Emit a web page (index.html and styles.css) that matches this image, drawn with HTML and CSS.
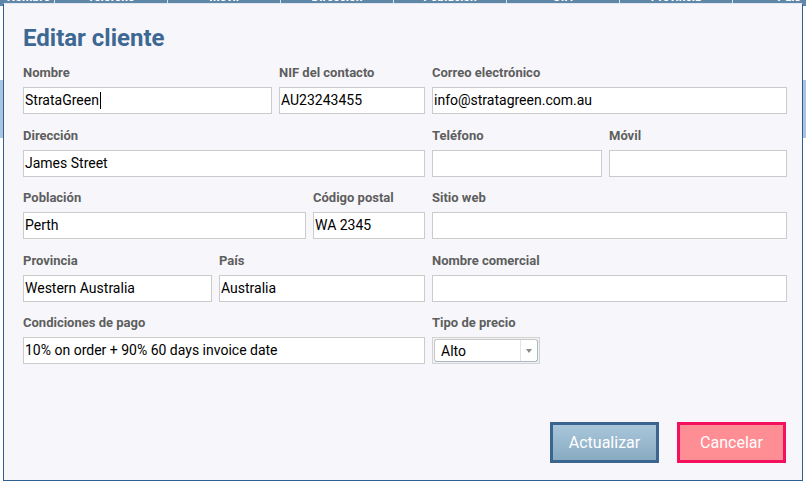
FILE: index.html
```html
<!DOCTYPE html>
<html lang="es">
<head>
<meta charset="utf-8">
<title>Editar cliente</title>
<link rel="stylesheet" href="styles.css">
</head>
<body>
<div class="page">
  <div class="grid-head">
    <span class="col first">Nombre</span>
    <span class="col">Teléfono</span>
    <span class="col">Móvil</span>
    <span class="col">Dirección</span>
    <span class="col">Población</span>
    <span class="col">C.P.</span>
    <span class="col">Provincia</span>
    <span class="col">País</span>
  </div>
  <div class="grid-body">
    <div class="grid-row top"></div>
    <div class="grid-row selected"></div>
    <div class="grid-row"></div>
  </div>
</div>

<div class="modal">
  <h1 class="title">Editar cliente</h1>
  <div class="form">
    <div class="row">
      <div class="group">
        <div class="field w-nombre"><label>Nombre</label><div class="input">StrataGreen<span class="caret"></span></div></div>
        <div class="field w-nif"><label>NIF del contacto</label><div class="input">AU23243455</div></div>
      </div>
      <div class="group right">
        <div class="field grow"><label>Correo electrónico</label><div class="input">info@stratagreen.com.au</div></div>
      </div>
    </div>
    <div class="row">
      <div class="group">
        <div class="field grow"><label>Dirección</label><div class="input">James Street</div></div>
      </div>
      <div class="group right">
        <div class="field w-tel"><label>Teléfono</label><div class="input"></div></div>
        <div class="field grow"><label>Móvil</label><div class="input"></div></div>
      </div>
    </div>
    <div class="row">
      <div class="group">
        <div class="field w-pob"><label>Población</label><div class="input">Perth</div></div>
        <div class="field grow"><label>Código postal</label><div class="input">WA 2345</div></div>
      </div>
      <div class="group right">
        <div class="field grow"><label>Sitio web</label><div class="input"></div></div>
      </div>
    </div>
    <div class="row">
      <div class="group">
        <div class="field w-prov"><label>Provincia</label><div class="input">Western Australia</div></div>
        <div class="field grow"><label>País</label><div class="input">Australia</div></div>
      </div>
      <div class="group right">
        <div class="field grow"><label>Nombre comercial</label><div class="input"></div></div>
      </div>
    </div>
    <div class="row">
      <div class="group">
        <div class="field grow"><label>Condiciones de pago</label><div class="input">10% on order + 90% 60 days invoice date</div></div>
      </div>
      <div class="group right">
        <div class="field"><label>Tipo de precio</label>
          <div class="select"><div class="select-inner"><span class="select-value">Alto</span><span class="select-arrow"><span class="tri"></span></span></div></div>
        </div>
      </div>
    </div>
  </div>
  <div class="actions">
    <button class="btn btn-primary">Actualizar</button>
    <button class="btn btn-cancel">Cancelar</button>
  </div>
</div>
</body>
</html>
```
FILE: styles.css
```css
html, body {
  margin: 0;
  padding: 0;
}
body {
  width: 806px;
  height: 484px;
  overflow: hidden;
  position: relative;
  background: #ffffff;
  font-family: Roboto, "Noto Sans", sans-serif;
}

/* background grid */
.grid-head {
  display: flex;
  height: 18px;
  margin-top: -12px;
  background: #5f87a8;
  color: #ffffff;
  font: 700 12px/18px Roboto, sans-serif;
}
.col {
  width: 113px;
  flex: none;
  text-align: center;
  border-left: 1px solid #d8e2ec;
  box-sizing: border-box;
  white-space: nowrap;
  overflow: hidden;
}
.col.first {
  width: 54px;
  border-left: 0;
  text-align: right;
  padding-right: 4px;
}
.grid-row {
  height: 58px;
  background: #ffffff;
}
.grid-row.top {
  height: 74px;
}
.grid-row.selected {
  background: #a8c4e0;
}

/* modal */
.modal {
  position: absolute;
  left: 3px;
  top: 3px;
  width: 800px;
  height: 478px;
  box-sizing: border-box;
  border: 1px solid #2f5f8e;
  border-top-color: #e3e7ef;
  background: #f7f7fb;
  padding: 20px 15px 17px 19px;
  display: flex;
  flex-direction: column;
}
.title {
  margin: 0 0 13px;
  font: 700 24px/28px Roboto, sans-serif;
  color: #3d6893;
}
.form {
  display: flex;
  flex-direction: column;
  gap: 13.5px;
}
.row {
  display: flex;
  gap: 7px;
}
.group {
  display: flex;
  gap: 7px;
  width: 402px;
  flex: none;
}
.group.right {
  width: 355px;
}
.field {
  flex: none;
}
.field.grow {
  flex: 1;
  min-width: 0;
}
.w-nombre { width: 249px; }
.w-nif { width: 146px; }
.w-tel { width: 170px; }
.w-pob { width: 283px; }
.w-prov { width: 189px; }

.field label {
  display: block;
  font: 700 13px/16px Roboto, sans-serif;
  color: #5e5e5e;
  margin-bottom: 6px;
  white-space: nowrap;
}
.input {
  box-sizing: border-box;
  height: 27px;
  border: 1px solid #cbcbcb;
  background: #ffffff;
  padding: 0 1px;
  font: 400 14px/25px Roboto, sans-serif;
  color: #000000;
  white-space: nowrap;
  overflow: hidden;
}
.caret {
  display: inline-block;
  width: 1px;
  height: 17px;
  background: #000000;
  vertical-align: -4px;
  margin-left: 1px;
}

/* select */
.select {
  box-sizing: border-box;
  width: 108px;
  height: 27px;
  border: 1px solid #d3d3d3;
  padding: 1px;
  background: #f2f2f4;
}
.select-inner {
  box-sizing: border-box;
  height: 100%;
  border: 1px solid #c8c8c8;
  border-right-color: #a9b6c4;
  border-bottom-color: #a9b6c4;
  border-radius: 3px;
  background: #ffffff;
  display: flex;
}
.select-value {
  flex: 1;
  padding-left: 6px;
  font: 400 14px/22px Roboto, sans-serif;
  color: #000000;
}
.select-arrow {
  width: 16px;
  border-left: 1px solid #e4e4e4;
  display: flex;
  align-items: center;
  justify-content: center;
}
.tri {
  width: 0;
  height: 0;
  border-left: 3px solid transparent;
  border-right: 3px solid transparent;
  border-top: 4px solid #8a8a8a;
}

/* actions */
.actions {
  margin-top: auto;
  display: flex;
  justify-content: flex-end;
  gap: 18px;
  padding-right: 1px;
}
.btn {
  width: 109px;
  height: 41px;
  box-sizing: border-box;
  border: 3px solid;
  font: 400 16px Roboto, sans-serif;
  color: #ffffff;
  padding: 0;
  cursor: pointer;
}
.btn-primary {
  border-color: #3a6590;
  background: linear-gradient(#a9c6da, #88abc2);
}
.btn-cancel {
  border-color: #f3105c;
  background: #ff8d94;
}
```
